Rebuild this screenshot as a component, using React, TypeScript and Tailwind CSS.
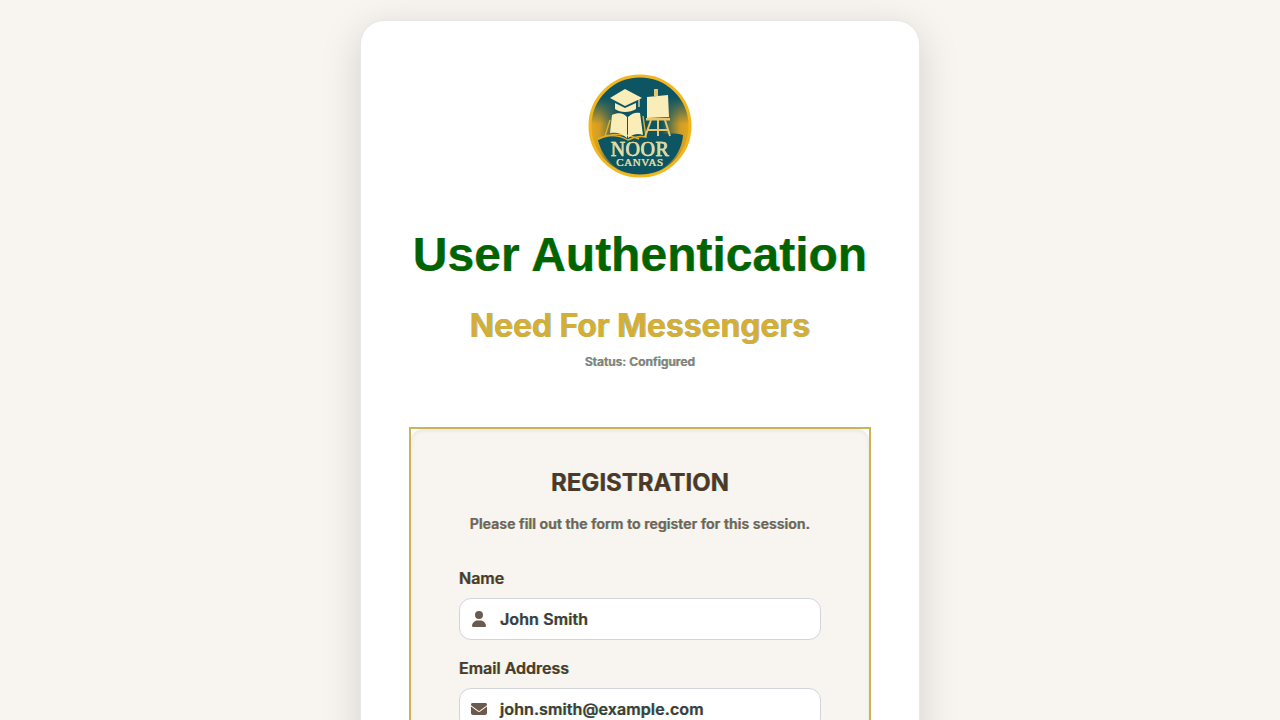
import { FaEnvelope, FaUser } from 'react-icons/fa6';

const Logo = () => (
    <svg width="140" height="130" viewBox="0 0 140 130" className="block">
        <defs>
            <linearGradient id="sides" x1="0" y1="0" x2="1" y2="0">
                <stop offset="0%" stopColor="#e6a91e" />
                <stop offset="10%" stopColor="#cf9c24" />
                <stop offset="28%" stopColor="#0e5563" />
                <stop offset="72%" stopColor="#0e5563" />
                <stop offset="90%" stopColor="#cf9c24" />
                <stop offset="100%" stopColor="#e6a91e" />
            </linearGradient>
            <linearGradient id="top" x1="0" y1="0" x2="0" y2="1">
                <stop offset="0%" stopColor="#0e5563" />
                <stop offset="22%" stopColor="#0e5563" />
                <stop offset="48%" stopColor="#0e5563" stopOpacity="0" />
            </linearGradient>
        </defs>
        <g stroke="#fdf3c8" strokeWidth="0.6" opacity="0.6">
            <path d="M70 7V13M70 117V123M7 65H13M127 65H133M25 20L30 25M110 105L115 110M25 110L30 105M110 25L115 20M44 11L47 16M93 114L96 119M44 119L47 114M93 16L96 11M11 40L16 43M124 87L129 90M11 90L16 87M124 43L129 40" />
        </g>
        <circle cx="70" cy="66" r="50" fill="url(#sides)" />
        <circle cx="70" cy="66" r="50" fill="url(#top)" stroke="#f2b61f" strokeWidth="3" />
        <path d="M28 80C45 73 60 76 69 80C85 74 100 72 113 75C112 95 95 114 70 114C46 114 32 97 28 80Z" fill="#0e5563" />
        <path d="M28 79C42 72 58 74 69 79" fill="none" stroke="#e3ad2a" strokeWidth="1.5" />
        <path d="M40 38L55 29L72 38L55 46Z" fill="#fbedb8" />
        <path d="M45 43V49C50 53 60 53 66 49V43L55 48Z" fill="#fbedb8" />
        <path d="M69 38V47" stroke="#fbedb8" strokeWidth="1.2" />
        <path d="M42 55C48 52 54 53 57 57V78C52 73 46 72 40 73Z" fill="#fbedb8" />
        <path d="M58 57C62 53 66 52 70 53L73 75C68 73 63 74 58 78Z" fill="#fbedb8" />
        <path d="M40 60L35 76C44 75 53 77 58 80C64 77 71 76 76 77L73 56" fill="none" stroke="#e3ad2a" strokeWidth="1.4" />
        <path d="M77 37L98 35L99 57L77 58Z" fill="#fbedb8" />
        <path d="M84 29H88V36H84Z" fill="#e9c66b" />
        <rect x="76" y="58" width="24" height="2.5" fill="#e9c66b" />
        <path d="M81 60L75 77M95 60L100 76M88 60V76M78 70H98" stroke="#e9c66b" strokeWidth="2" fill="none" />
        <text x="70" y="96" textAnchor="middle" fontFamily="'Liberation Serif', serif" fontSize="20" fill="#fbedb8" stroke="#fbedb8" strokeWidth="0.4" letterSpacing="0.5">NOOR</text>
        <text x="70" y="106" textAnchor="middle" fontFamily="'Liberation Serif', serif" fontSize="11" fill="#fbedb8" stroke="#fbedb8" strokeWidth="0.2" letterSpacing="0.6">CANVAS</text>
    </svg>
);

export default function App() {
    return (
        <div className="h-[720px] overflow-hidden bg-[#f8f5f1] font-['Inter',sans-serif]">
            <div className="mx-auto mt-5 flex w-[560px] flex-col items-center rounded-[24px] border border-[#e5e7eb] bg-white px-12 pt-[39px] pb-12 shadow-[0_10px_40px_rgba(0,0,0,0.15)] [text-shadow:-0.4px_0_0_rgba(200,130,0,0.6),0.4px_0_0_rgba(0,170,220,0.6)]">
                <Logo />
                <h1 className="mt-[36px] text-center font-['Liberation_Sans',sans-serif] text-[48px] leading-[58px] font-bold text-[#006400]">
                    User Authentication
                </h1>
                <h2 className="mt-[18px] text-center text-[32px] leading-[48px] font-bold tracking-[-0.1px] text-[#d4af37]">
                    Need For Messengers
                </h2>
                <p className="mt-[3px] text-center text-[12px] leading-[18px] font-semibold tracking-[0.05px] text-[#808080]">
                    Status: Configured
                </p>

                <div className="mt-[56px] w-[462px] border-2 border-[#c9b458]">
                    <div className="rounded-[12px] bg-[#f8f5f1] px-12 pt-[36px] pb-12 shadow-[inset_0_2px_4px_rgba(0,0,0,0.06)]">
                        <h3 className="text-center text-[24px] leading-[36px] font-bold text-[#4b3a2a]">
                            REGISTRATION
                        </h3>
                        <p className="mt-[12px] text-center text-[14px] leading-[21px] font-semibold tracking-[0.09px] text-[#706357]">
                            Please fill out the form to register for this session.
                        </p>

                        <div className="mt-[32px]">
                            <label className="block text-[16px] leading-[24px] font-semibold text-[#4b3a2a]">Name</label>
                            <div className="mt-[8px] flex h-[42px] items-center rounded-[12px] border border-[#d1d5db] bg-white pl-[11px]">
                                <FaUser className="h-[16px] w-[16px] text-[#6b5b4f]" />
                                <span className="ml-[13px] text-[16px] font-semibold tracking-[0.1px] text-[#3d3d3d]">John Smith</span>
                            </div>
                        </div>

                        <div className="mt-[16px]">
                            <label className="block text-[16px] leading-[24px] font-semibold text-[#4b3a2a]">Email Address</label>
                            <div className="mt-[8px] flex h-[42px] items-center rounded-[12px] border border-[#d1d5db] bg-white pl-[11px]">
                                <FaEnvelope className="h-[16px] w-[16px] text-[#6b5b4f]" />
                                <span className="ml-[13px] text-[16px] font-semibold tracking-[0.1px] text-[#3d3d3d]">john.smith@example.com</span>
                            </div>
                        </div>
                    </div>
                </div>
            </div>
        </div>
    );
}
